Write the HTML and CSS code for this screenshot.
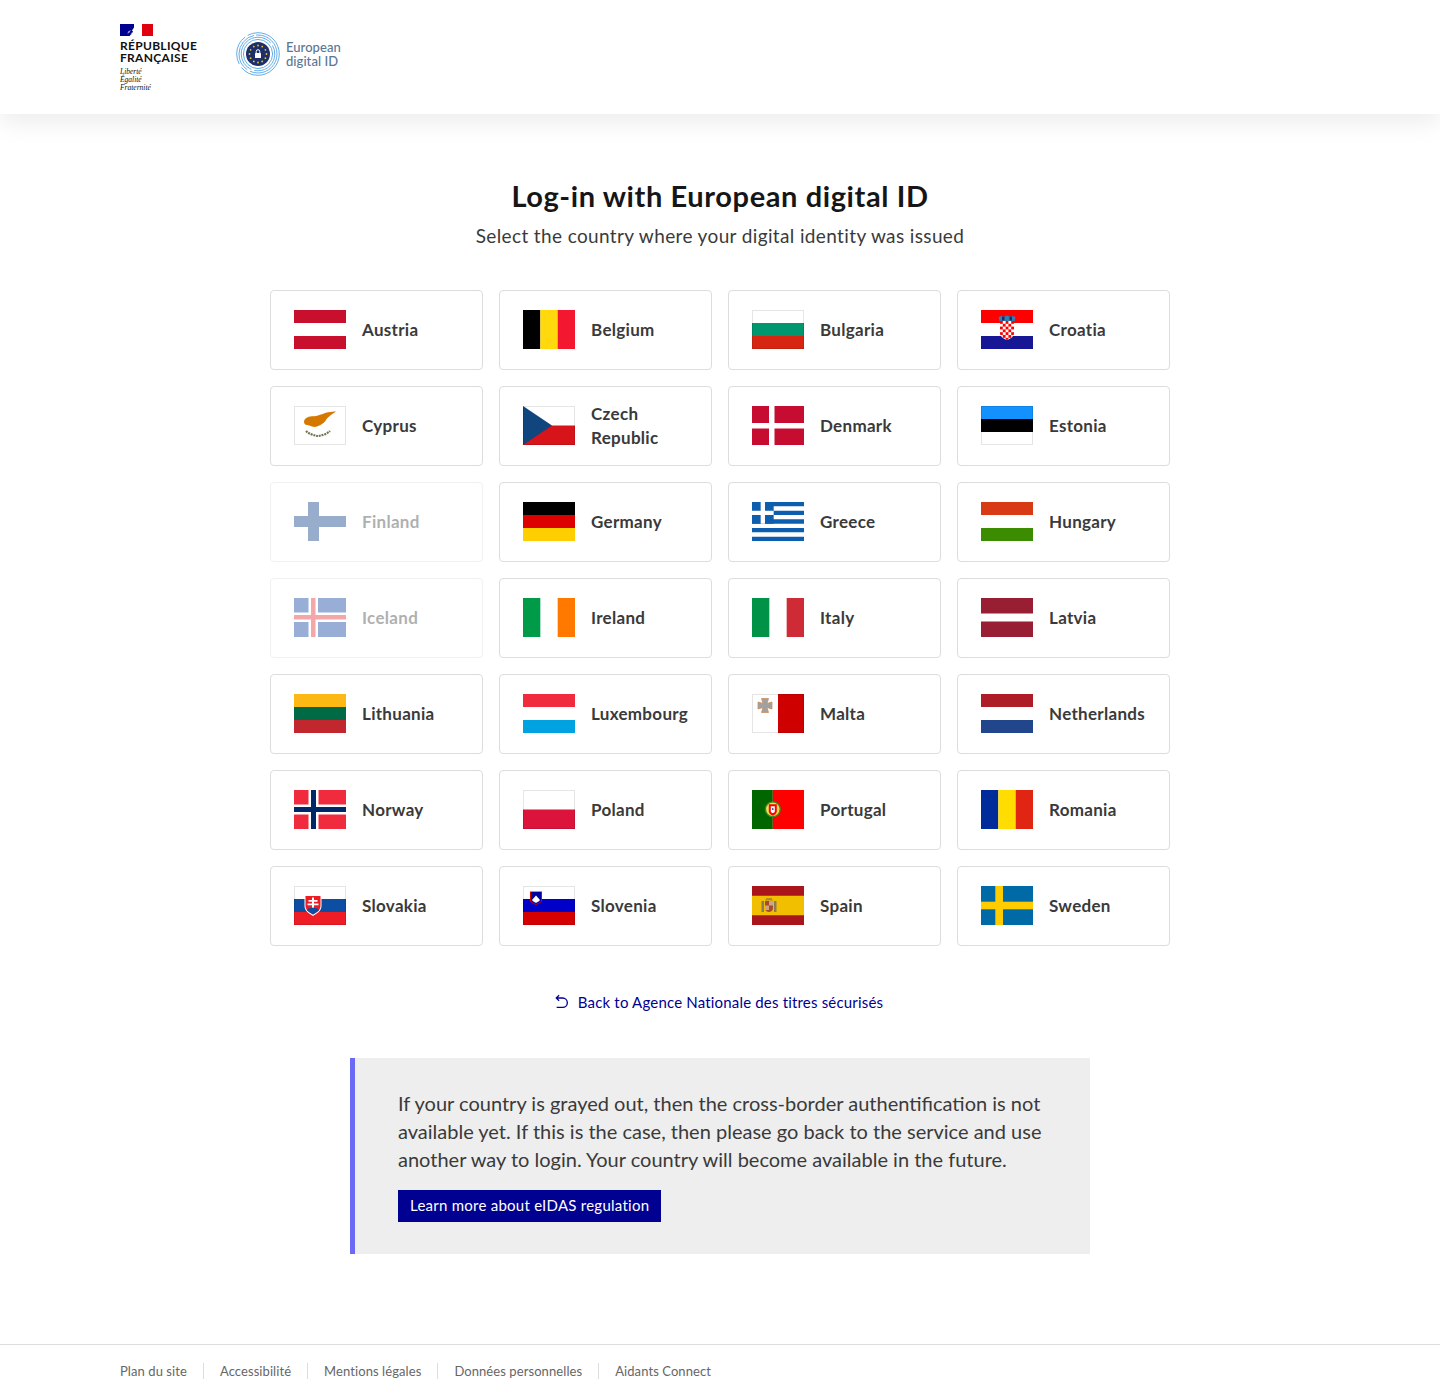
FILE: index.html
```html
<!DOCTYPE html>
<html lang="en">
<head>
    <meta charset="UTF-8">
    <meta name="viewport" content="width=device-width, initial-scale=1.0">
    <title>Log-in with European digital ID</title>
    <link rel="stylesheet" href="styles.css">
</head>
<body>
    <header class="site-header">
        <div class="marianne">
            <svg class="marianne-flag" viewBox="0 0 33 12" width="33" height="12">
                <rect width="33" height="12" fill="#fff"/>
                <rect width="14" height="12" fill="#000091"/>
                <rect x="22" width="11" height="12" fill="#e1000f"/>
                <path d="M15 0h5l-1 2 2 2.500-1 1.500 .5 2-2 1-2.500 3H9.500l2-2 1.500-2.500-1-1 2-3z" fill="#fff"/>
                <path d="M8 7.500l3-1.500-1.500 2.500-2 1.500zM11 9l2-1-2.500 3z" fill="#9a9ad6"/>
            </svg>
            <div class="marianne-name">RÉPUBLIQUE<br>FRANÇAISE</div>
            <div class="marianne-motto">Liberté<br>Égalité<br>Fraternité</div>
        </div>
        <div class="eid-logo">
            <svg viewBox="0 0 44 44" width="44" height="44" fill="none">
                <g stroke="#63ade9" stroke-width="1">
                    <circle cx="22" cy="22" r="21.300" stroke-dasharray="52 4 30 3"/>
                    <circle cx="22" cy="22" r="19" stroke-dasharray="38 3 44 2"/>
                    <circle cx="22" cy="22" r="16.800" stroke-dasharray="30 3 60 3"/>
                    <circle cx="22" cy="22" r="14.600"/>
                </g>
                <circle cx="22" cy="22" r="12" fill="#1d2f66"/>
                <g fill="#e6c440">
                    <circle cx="22" cy="13.500" r=".9"/><circle cx="26.200" cy="14.600" r=".9"/><circle cx="29.400" cy="17.800" r=".9"/>
                    <circle cx="30.500" cy="22" r=".9"/><circle cx="29.400" cy="26.200" r=".9"/><circle cx="26.200" cy="29.400" r=".9"/>
                    <circle cx="22" cy="30.500" r=".9"/><circle cx="17.800" cy="29.400" r=".9"/><circle cx="14.600" cy="26.200" r=".9"/>
                    <circle cx="13.500" cy="22" r=".9"/><circle cx="14.600" cy="17.800" r=".9"/><circle cx="17.800" cy="14.600" r=".9"/>
                </g>
                <rect x="19" y="21" width="6" height="5" rx=".6" fill="#fff"/>
                <path d="M20.200 21v-1.500a1.800 1.800 0 0 1 3.600 0V21" stroke="#fff" stroke-width="1"/>
            </svg>
            <div class="eid-name">European<br>digital ID</div>
        </div>
    </header>

    <main class="content">
        <h1 class="title">Log-in with European digital ID</h1>
        <p class="subtitle">Select the country where your digital identity was issued</p>

        <div class="country-grid">
            <a class="country">
                <svg class="flag" viewBox="0 0 52 39"><rect width="52" height="13" fill="#c8102e"/><rect y="26" width="52" height="13" fill="#c8102e"/></svg>
                <span>Austria</span>
            </a>
            <a class="country">
                <svg class="flag" viewBox="0 0 52 39"><rect width="17.330" height="39" fill="#000"/><rect x="17.330" width="17.340" height="39" fill="#ffd90c"/><rect x="34.670" width="17.330" height="39" fill="#f31830"/></svg>
                <span>Belgium</span>
            </a>
            <a class="country">
                <svg class="flag edged" viewBox="0 0 52 39"><rect y="13" width="52" height="13" fill="#00966e"/><rect y="26" width="52" height="13" fill="#d62612"/></svg>
                <span>Bulgaria</span>
            </a>
            <a class="country">
                <svg class="flag" viewBox="0 0 52 39">
                    <defs>
                        <pattern id="hr-check" width="5.600" height="5.600" x="19" y="11" patternUnits="userSpaceOnUse">
                            <path d="M0 0h2.800v2.800H0zM2.800 2.800h2.800v2.800H2.800z" fill="#f00"/>
                        </pattern>
                    </defs>
                    <rect width="52" height="13" fill="#f00"/><rect y="26" width="52" height="13" fill="#171796"/>
                    <path d="M17.500 7l3-1 2.500 .5 3-1 3 1 2.500-.5 3 1-1 4.500H18.500z" fill="#2d7fb5"/>
                    <path d="M21 6.500h2.500v4H21zM28.500 6.500H31v4h-2.500z" fill="#1d2f66"/>
                    <path d="M19 11h14v12c0 3.500-3 5.500-7 7-4-1.500-7-3.500-7-7z" fill="#fff"/>
                    <path d="M19 11h14v12c0 3.500-3 5.500-7 7-4-1.500-7-3.500-7-7z" fill="url(#hr-check)"/>
                </svg>
                <span>Croatia</span>
            </a>

            <a class="country">
                <svg class="flag edged" viewBox="0 0 52 39">
                    <path d="M10 16c0-3 3-5 6-5.500 3-.5 5 0 8-1 3-1 5-1.500 7-2.500 4-1 8-1.500 11-1.500-3 2-6 4-8 6-2 1.500-2 3.500-4 5-2 2-5 3-7 4-2 .5-3 .5-5 0-3-1-4-1.500-5-1.500-2 0-3-1.500-3-3.500z" fill="#d57800"/>
                    <path d="M12 25c3 3 8 4.500 12 5 4-.5 9-2 12-5" stroke="#6f7a55" stroke-width="2.200" stroke-dasharray="2 .8" fill="none"/>
                </svg>
                <span>Cyprus</span>
            </a>
            <a class="country">
                <svg class="flag edged" viewBox="0 0 52 39"><rect y="19.500" width="52" height="19.500" fill="#d7141a"/><path d="M0 0l29 19.500L0 39z" fill="#11457e"/></svg>
                <span>Czech Republic</span>
            </a>
            <a class="country">
                <svg class="flag" viewBox="0 0 52 39"><rect width="52" height="39" fill="#c60c30"/><rect x="17" width="5.500" height="39" fill="#fff"/><rect y="17" width="52" height="5.500" fill="#fff"/></svg>
                <span>Denmark</span>
            </a>
            <a class="country">
                <svg class="flag edged" viewBox="0 0 52 39"><rect width="52" height="13" fill="#1291ff"/><rect y="13" width="52" height="13" fill="#000"/></svg>
                <span>Estonia</span>
            </a>

            <a class="country is-disabled">
                <svg class="flag" viewBox="0 0 52 39"><rect x="14" width="11" height="39" fill="#003580"/><rect y="14" width="52" height="11" fill="#003580"/></svg>
                <span>Finland</span>
            </a>
            <a class="country">
                <svg class="flag" viewBox="0 0 52 39"><rect width="52" height="13" fill="#000"/><rect y="13" width="52" height="13" fill="#d00"/><rect y="26" width="52" height="13" fill="#ffce00"/></svg>
                <span>Germany</span>
            </a>
            <a class="country">
                <svg class="flag" viewBox="0 0 52 39">
                    <rect width="52" height="39" fill="#0d5eaf"/>
                    <path d="M0 6.500h52M0 15.170h52M0 23.830h52M0 32.500h52" stroke="#fff" stroke-width="4.330"/>
                    <rect width="21.670" height="21.670" fill="#0d5eaf"/>
                    <path d="M8.670 0h4.330v21.670H8.670zM0 8.670h21.670V13H0z" fill="#fff"/>
                </svg>
                <span>Greece</span>
            </a>
            <a class="country">
                <svg class="flag" viewBox="0 0 52 39"><rect width="52" height="13" fill="#d83a16"/><rect y="26" width="52" height="13" fill="#3c8c02"/></svg>
                <span>Hungary</span>
            </a>

            <a class="country is-disabled">
                <svg class="flag" viewBox="0 0 52 39">
                    <rect width="52" height="39" fill="#02369c"/>
                    <rect x="14.500" width="9.500" height="39" fill="#fff"/><rect y="14.500" width="52" height="9.500" fill="#fff"/>
                    <rect x="17" width="4.500" height="39" fill="#e2262b"/><rect y="17" width="52" height="4.500" fill="#e2262b"/>
                </svg>
                <span>Iceland</span>
            </a>
            <a class="country">
                <svg class="flag" viewBox="0 0 52 39"><rect width="17.330" height="39" fill="#009b48"/><rect x="34.670" width="17.330" height="39" fill="#ff7900"/></svg>
                <span>Ireland</span>
            </a>
            <a class="country">
                <svg class="flag" viewBox="0 0 52 39"><rect width="17.330" height="39" fill="#009246"/><rect x="34.670" width="17.330" height="39" fill="#ce2b37"/></svg>
                <span>Italy</span>
            </a>
            <a class="country">
                <svg class="flag" viewBox="0 0 52 39"><rect width="52" height="15.500" fill="#971e33"/><rect y="23.500" width="52" height="15.500" fill="#971e33"/></svg>
                <span>Latvia</span>
            </a>

            <a class="country">
                <svg class="flag" viewBox="0 0 52 39"><rect width="52" height="13" fill="#fdb913"/><rect y="13" width="52" height="13" fill="#006a44"/><rect y="26" width="52" height="13" fill="#c1272d"/></svg>
                <span>Lithuania</span>
            </a>
            <a class="country">
                <svg class="flag" viewBox="0 0 52 39"><rect width="52" height="13" fill="#ef2b3d"/><rect y="26" width="52" height="13" fill="#00a3e0"/></svg>
                <span>Luxembourg</span>
            </a>
            <a class="country">
                <svg class="flag edged" viewBox="0 0 52 39">
                    <rect x="26" width="26" height="39" fill="#cf0000"/>
                    <path d="M9.500 4.500h7l-1.500 5 5-1.500v7l-5-1.500 1.500 5h-7l1.500-5-5 1.500V8l5 1.500z" fill="#a1a1a1" stroke="#c98f60" stroke-width=".8"/>
                </svg>
                <span>Malta</span>
            </a>
            <a class="country">
                <svg class="flag" viewBox="0 0 52 39"><rect width="52" height="13" fill="#ae1c28"/><rect y="26" width="52" height="13" fill="#21468b"/></svg>
                <span>Netherlands</span>
            </a>

            <a class="country">
                <svg class="flag" viewBox="0 0 52 39">
                    <rect width="52" height="39" fill="#ef2b3d"/>
                    <rect x="14.500" width="10" height="39" fill="#fff"/><rect y="14.500" width="52" height="10" fill="#fff"/>
                    <rect x="17" width="5" height="39" fill="#002868"/><rect y="17" width="52" height="5" fill="#002868"/>
                </svg>
                <span>Norway</span>
            </a>
            <a class="country">
                <svg class="flag edged" viewBox="0 0 52 39"><rect y="19.500" width="52" height="19.500" fill="#dc143c"/></svg>
                <span>Poland</span>
            </a>
            <a class="country">
                <svg class="flag" viewBox="0 0 52 39">
                    <rect width="20.800" height="39" fill="#060"/><rect x="20.800" width="31.200" height="39" fill="#f00"/>
                    <circle cx="20.800" cy="19.300" r="7.400" fill="#f4e04d" stroke="#3c8a1e" stroke-width="1.400"/>
                    <path d="M16.800 14.300h8v7c0 2.500-2 3.500-4 4.500-2-1-4-2-4-4.500z" fill="#f00"/>
                    <path d="M18.800 16.300h4v5c0 1-1 1.500-2 2-1-.5-2-1-2-2z" fill="#fff"/>
                    <rect x="20" y="18.300" width="1.500" height="1.500" fill="#003399"/>
                </svg>
                <span>Portugal</span>
            </a>
            <a class="country">
                <svg class="flag" viewBox="0 0 52 39"><rect width="17.330" height="39" fill="#002b9a"/><rect x="17.330" width="17.340" height="39" fill="#ffdd00"/><rect x="34.670" width="17.330" height="39" fill="#e02612"/></svg>
                <span>Romania</span>
            </a>

            <a class="country">
                <svg class="flag edged" viewBox="0 0 52 39">
                    <rect y="13" width="52" height="13" fill="#0b4ea2"/><rect y="26" width="52" height="13" fill="#ee1c25"/>
                    <path d="M10.500 9h17v11c0 5-4.500 7.500-8.500 10-4-2.500-8.500-5-8.500-10z" fill="#fff"/>
                    <path d="M11.500 10h15v10c0 4-4 6.500-7.500 8.500-3.500-2-7.500-4.500-7.500-8.500z" fill="#ee1c25"/>
                    <path d="M18 11.500h2v2.500h3.500v1.800H20v1.700h4.500v1.800H20v3h-2v-3h-4.500v-1.800H18v-1.700h-3.500V14H18z" fill="#fff"/>
                    <path d="M12.800 24c2-2.500 4-1.500 6.200-2.500 2.200 1 4.200 0 6.200 2.500-2 2-4.200 3.400-6.200 4.500-2-1.100-4.200-2.500-6.200-4.500z" fill="#0b4ea2"/>
                </svg>
                <span>Slovakia</span>
            </a>
            <a class="country">
                <svg class="flag edged" viewBox="0 0 52 39">
                    <rect y="13" width="52" height="13" fill="#0000c8"/><rect y="26" width="52" height="13" fill="#d50000"/>
                    <path d="M7 5.500h12v9c0 2-3.500 3-6 4.500-2.500-1.500-6-2.500-6-4.500z" fill="#d50000"/>
                    <path d="M8 6h10v8.500c0 1.500-3 2.500-5 3.500-2-1-5-2-5-3.500z" fill="#0000a0"/>
                    <path d="M9 14l4-4.500 4 4.500c-1 1.500-2.500 2-4 3-1.500-1-3-1.500-4-3z" fill="#fff"/>
                </svg>
                <span>Slovenia</span>
            </a>
            <a class="country">
                <svg class="flag" viewBox="0 0 52 39">
                    <rect width="52" height="39" fill="#aa151b"/><rect y="9.750" width="52" height="19.500" fill="#f1bf00"/>
                    <rect x="9.500" y="15" width="2.500" height="11" fill="#8f7a58"/><rect x="22" y="15" width="2.500" height="11" fill="#8f7a58"/>
                    <path d="M13 15h8v7c0 2.500-2 4-4 4s-4-1.500-4-4z" fill="#a54b2a"/>
                    <path d="M13 14.500h8l-1.500-2.500h-5z" fill="#b88a2a"/>
                    <path d="M17 15h4v4.500h-4zM13 19.500h4V24h-4z" fill="#c9a58a"/>
                </svg>
                <span>Spain</span>
            </a>
            <a class="country">
                <svg class="flag" viewBox="0 0 52 39"><rect width="52" height="39" fill="#006aa7"/><rect x="14.300" width="7.700" height="39" fill="#fecc00"/><rect y="15.700" width="52" height="7.600" fill="#fecc00"/></svg>
                <span>Sweden</span>
            </a>
        </div>

        <a class="back-link">
            <svg viewBox="0 0 24 24" width="16" height="16"><path d="M5.828 7l2.536 2.536L6.950 10.950 2 6l4.950-4.950 1.414 1.414L5.828 5H13a8 8 0 1 1 0 16H4v-2h9a6 6 0 1 0 0-12H5.828z" fill="currentColor"/></svg>
            Back to Agence Nationale des titres sécurisés
        </a>

        <section class="notice">
            <p>If your country is grayed out, then the cross-border authentification is not available yet. If this is the case, then please go back to the service and use another way to login. Your country will become available in the future.</p>
            <a class="notice-btn">Learn more about eIDAS regulation</a>
        </section>
    </main>

    <footer class="site-footer">
        <a>Plan du site</a>
        <a>Accessibilité</a>
        <a>Mentions légales</a>
        <a>Données personnelles</a>
        <a>Aidants Connect</a>
    </footer>
</body>
</html>
```

FILE: styles.css
```css
* {
    box-sizing: border-box;
}

body {
    margin: 0;
    font-family: "Lato", "Noto Sans", sans-serif;
    color: #1e1e1e;
    background: #fff;
}

.site-header {
    display: flex;
    align-items: flex-start;
    gap: 40px;
    height: 114px;
    padding: 24px 120px 0;
    box-shadow: 0 8px 24px rgba(0, 0, 0, 0.08);
}

.marianne {
    width: 76px;
}

.marianne-flag {
    display: block;
    margin-bottom: 4px;
}

.marianne-name {
    font-size: 12px;
    line-height: 12px;
    font-weight: 700;
    letter-spacing: 0.3px;
    white-space: nowrap;
    color: #111;
}

.marianne-motto {
    margin-top: 4px;
    font-family: "Liberation Serif", serif;
    font-style: italic;
    font-size: 7.5px;
    line-height: 8px;
    color: #111;
}

.eid-logo {
    display: flex;
    align-items: center;
    gap: 6px;
    margin-top: 8px;
}

.eid-logo svg {
    display: block;
}

.eid-name {
    font-size: 13px;
    line-height: 14px;
    font-weight: 500;
    letter-spacing: 0.05px;
    color: #5a7695;
}

.content {
    display: flex;
    flex-direction: column;
    align-items: center;
    height: 1230px;
    padding-top: 63px;
}

.title {
    margin: 0;
    font-size: 29px;
    line-height: 38px;
    font-weight: 700;
    letter-spacing: 0.6px;
    color: #161616;
}

.subtitle {
    margin: 9px 0 0;
    font-size: 19px;
    line-height: 24px;
    letter-spacing: 0.37px;
    color: #3a3a3a;
}

.country-grid {
    display: grid;
    grid-template-columns: repeat(4, 213px);
    grid-auto-rows: 80px;
    gap: 16px;
    margin-top: 42px;
}

.country {
    display: flex;
    align-items: center;
    gap: 16px;
    padding: 0 23px;
    border: 1px solid #ddd;
    border-radius: 4px;
    font-size: 17px;
    line-height: 24px;
    font-weight: 700;
    letter-spacing: 0.3px;
    color: #3a3a3a;
}

.country.is-disabled {
    opacity: 0.4;
}

.flag {
    display: block;
    flex: none;
    width: 52px;
    height: 39px;
    margin-bottom: 1px;
}

.flag.edged {
    outline: 1px solid rgba(0, 0, 0, 0.1);
    outline-offset: -1px;
}

.back-link {
    display: flex;
    align-items: center;
    gap: 8px;
    margin: 44px 3px 0 0;
    font-size: 15px;
    line-height: 24px;
    letter-spacing: 0.18px;
    color: #000091;
}

.notice {
    width: 740px;
    height: 196px;
    margin-top: 44px;
    padding: 31px 48px 0 43px;
    border-left: 5px solid #6a6af4;
    background: #eee;
}

.notice p {
    margin: 0 0 17px;
    font-size: 20px;
    line-height: 28px;
    color: #3a3a3a;
}

.notice-btn {
    display: inline-block;
    padding: 3px 12px 5px;
    font-size: 15px;
    line-height: 24px;
    letter-spacing: 0.25px;
    color: #fff;
    background: #000091;
}

.site-footer {
    display: flex;
    align-items: center;
    height: 53px;
    padding: 0 120px;
    border-top: 1px solid #ddd;
    font-size: 13px;
    line-height: 16px;
    letter-spacing: 0.08px;
    color: #666;
}

.site-footer a {
    padding: 0 16px;
    border-left: 1px solid #ddd;
}

.site-footer a:first-child {
    padding-left: 0;
    border-left: 0;
}
```
